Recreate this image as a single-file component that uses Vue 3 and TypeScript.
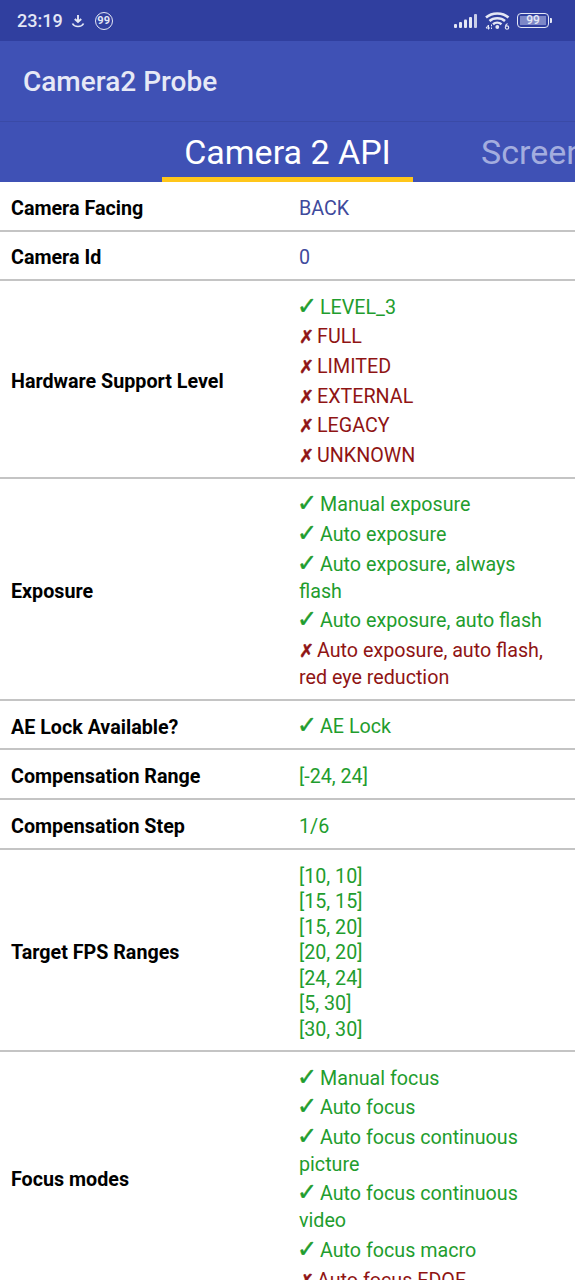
<script setup lang="ts">
interface Item {
  text: string;
  state?: 'yes' | 'no' | 'plain';
}
interface Row {
  label: string;
  items: Item[];
  tone?: 'blue' | 'green';
  dense?: boolean;
}

const yes = (text: string): Item => ({ text, state: 'yes' });
const no = (text: string): Item => ({ text, state: 'no' });
const plain = (text: string): Item => ({ text, state: 'plain' });

const rows: Row[] = [
  { label: 'Camera Facing', items: [plain('BACK')], tone: 'blue' },
  { label: 'Camera Id', items: [plain('0')], tone: 'blue' },
  {
    label: 'Hardware Support Level',
    items: [yes('LEVEL_3'), no('FULL'), no('LIMITED'), no('EXTERNAL'), no('LEGACY'), no('UNKNOWN')],
  },
  {
    label: 'Exposure',
    items: [
      yes('Manual exposure'),
      yes('Auto exposure'),
      yes('Auto exposure, always flash'),
      yes('Auto exposure, auto flash'),
      no('Auto exposure, auto flash, red eye reduction'),
    ],
  },
  { label: 'AE Lock Available?', items: [yes('AE Lock')] },
  { label: 'Compensation Range', items: [plain('[-24, 24]')], tone: 'green' },
  { label: 'Compensation Step', items: [plain('1/6')], tone: 'green' },
  {
    label: 'Target FPS Ranges',
    items: [
      plain('[10, 10]\n[15, 15]\n[15, 20]\n[20, 20]\n[24, 24]\n[5, 30]\n[30, 30]'),
    ],
    tone: 'green',
    dense: true,
  },
  {
    label: 'Focus modes',
    items: [
      yes('Manual focus'),
      yes('Auto focus'),
      yes('Auto focus continuous picture'),
      yes('Auto focus continuous video'),
      yes('Auto focus macro'),
      no('Auto focus EDOF'),
    ],
  },
];
</script>

<template>
  <div class="screen">
    <div class="status">
      <div class="status-left">
        <span class="clock">23:19</span>
        <svg class="dl" width="14" height="14" viewBox="0 0 14 14">
          <path d="M7 1v6.500M3.800 5 7 8l3.200-3" fill="none" stroke="#e4e7f5" stroke-width="1.900" />
          <path d="M1.500 9.500c1 2.200 3 3 5.500 3s4.500-.8 5.500-3" fill="none" stroke="#e4e7f5" stroke-width="1.700" />
        </svg>
        <span class="badge">99</span>
      </div>
      <div class="status-right">
        <svg width="24" height="16" viewBox="0 0 24 16">
          <rect x="0" y="11" width="3" height="4" rx="1" fill="#e4e7f5" />
          <rect x="5" y="9" width="3" height="6" rx="1" fill="#e4e7f5" />
          <rect x="10" y="6.500" width="3" height="8.500" rx="1" fill="#e4e7f5" />
          <rect x="15" y="4" width="3" height="11" rx="1" fill="#e4e7f5" />
          <rect x="20" y="1" width="3" height="14" rx="1" fill="#e4e7f5" opacity=".85" />
        </svg>
        <svg width="25" height="19" viewBox="0 0 25 19">
          <path d="M1 6.500C7 1 17.500 1 23.500 6.500M4.500 10c4-3.700 11.500-3.700 15.500 0M8 13.200c2.400-2 6-2 8.500 0" fill="none" stroke="#e4e7f5" stroke-width="2.500" />
          <circle cx="12.300" cy="16" r="1.900" fill="#e4e7f5" />
          <path d="M3.500 18.500v-4.500L1 17h4M6.500 13.500v1.800M6.500 16.500v1.500" fill="none" stroke="#e4e7f5" stroke-width="1" />
          <path d="M22.500 12.500c-1.500.8-2.200 2-2.200 3.500 0 1.400.7 2.200 1.700 2.200s1.700-.8 1.700-1.700-.7-1.600-1.700-1.600-1.500.4-1.700 1" fill="none" stroke="#e4e7f5" stroke-width="1.100" />
        </svg>
        <div class="battery">
          <span class="battery-body">99</span>
          <span class="battery-tip"></span>
        </div>
      </div>
    </div>
    <div class="appbar">Camera2 Probe</div>
    <div class="tabs">
      <div class="tab active">Camera 2 API</div>
      <div class="tab">Screen</div>
    </div>
    <div class="table">
      <div v-for="row in rows" :key="row.label" class="row">
        <div class="label">{{ row.label }}</div>
        <div class="values" :class="[row.tone, { dense: row.dense }]">
          <div v-for="item in row.items" :key="item.text" class="item" :class="item.state">
            <span v-if="item.state === 'yes'" class="mark tick">✓</span>
            <span v-if="item.state === 'no'" class="mark cross">✗</span>{{ item.text }}
          </div>
        </div>
      </div>
    </div>
  </div>
</template>

<style>
html,
body {
  margin: 0;
  background: #fff;
}
</style>

<style scoped>
.screen {
  width: 575px;
  height: 1280px;
  overflow: hidden;
  background: #fff;
  font-family: Roboto, "Liberation Sans", sans-serif;
}
.status {
  height: 41px;
  background: #303f9f;
  color: #e4e7f5;
  display: flex;
  align-items: center;
  justify-content: space-between;
  padding: 0 23px 0 17px;
  box-sizing: border-box;
}
.status-left,
.status-right {
  display: flex;
  align-items: center;
}
.status-left {
  gap: 8px;
}
.status-right {
  gap: 7px;
}
.clock {
  font-size: 18px;
  font-weight: 500;
}
.dl {
  margin-right: 2px;
}
.badge {
  width: 16px;
  height: 16px;
  border: 1.500px solid #e4e7f5;
  border-radius: 50%;
  font-size: 11px;
  font-weight: 700;
  display: flex;
  align-items: center;
  justify-content: center;
}
.battery {
  display: flex;
  align-items: center;
  gap: 1px;
}
.battery-body {
  width: 30px;
  height: 13px;
  border: 1.500px solid #e4e7f5;
  border-radius: 4px;
  font-size: 12px;
  font-weight: 500;
  line-height: 13px;
  text-align: center;
  background: linear-gradient(#7d87c7, #7d87c7) no-repeat center / 26px 9px;
}
.battery-tip {
  width: 2px;
  height: 5px;
  background: #e4e7f5;
  border-radius: 0 1px 1px 0;
}
.appbar {
  height: 81px;
  background: #3f51b5;
  color: #e6e9f6;
  font-size: 28px;
  font-weight: 500;
  line-height: 82px;
  padding-left: 23px;
  border-bottom: 1px solid #3a4aa6;
  box-sizing: border-box;
}
.tabs {
  height: 60px;
  background: #3f51b5;
  display: flex;
  padding-left: 162px;
  overflow: hidden;
}
.tab {
  font-size: 34px;
  line-height: 60px;
  color: #a3addf;
  flex: none;
}
.tab.active {
  width: 251px;
  text-align: center;
  color: #fff;
  border-bottom: 5px solid #ffc61a;
  box-sizing: border-box;
  margin-right: 68px;
}
.row {
  display: flex;
  align-items: center;
  border-bottom: 2px solid #c4c4c4;
  padding: 10px 0 8px;
  box-sizing: border-box;
}
.label {
  width: 299px;
  flex: none;
  margin-top: 3px;
  padding-left: 11px;
  box-sizing: border-box;
  font-size: 19.700px;
  font-weight: 700;
  color: #000;
}
.values {
  flex: 1;
  padding-right: 20px;
  font-size: 19.700px;
  line-height: 27px;
}
.values.blue {
  color: #3f4a9c;
}
.values.green {
  color: #1f9d2e;
}
.values.dense {
  line-height: 25.500px;
  padding-top: 1.500px;
}
.item {
  margin-top: 2.600px;
  white-space: pre-line;
}
.item.yes {
  color: #1f9d2e;
}
.item.no {
  color: #8f1414;
}
.mark {
  display: inline-block;
  font-family: "DejaVu Sans", sans-serif;
  font-weight: 700;
  -webkit-text-stroke: .5px currentColor;
}
.tick {
  width: 23px;
  margin-left: -2px;
  font-size: 24px;
  line-height: 20px;
}
.cross {
  width: 18px;
  font-size: 18px;
  line-height: 20px;
}
</style>
